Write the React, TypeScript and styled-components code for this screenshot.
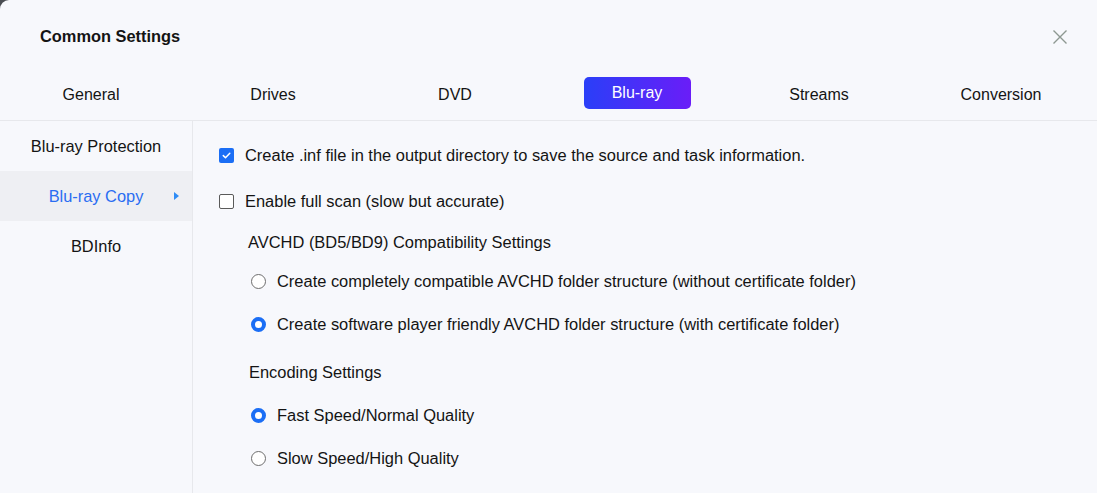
import React, { useState } from "react";
import styled, { createGlobalStyle } from "styled-components";

const Global = createGlobalStyle`
  html, body { margin: 0; padding: 0; background: #4a4d52; }
  body { font-family: "Liberation Sans", Arial, sans-serif; }
  * { box-sizing: border-box; }
`;

const Window = styled.div`
  width: 1097px;
  height: 493px;
  background: #f7f8fc;
  border-top-left-radius: 9px;
  display: flex;
  flex-direction: column;
  color: #141414;
  overflow: hidden;
`;

const Header = styled.div`
  height: 72px;
  padding: 1px 29px 0 40px;
  display: flex;
  align-items: center;
  justify-content: space-between;
`;

const Title = styled.div`
  font-size: 16.4px;
  font-weight: bold;
`;

const CloseButton = styled.button`
  border: 0;
  background: none;
  padding: 0;
  width: 16px;
  height: 16px;
  display: flex;
  cursor: pointer;
`;

const TabRow = styled.div`
  display: grid;
  grid-template-columns: repeat(6, 182px);
  height: 49px;
  padding-top: 5px;
  border-bottom: 1px solid #e7e8ec;
`;

const TabCell = styled.div`
  display: flex;
  justify-content: center;
`;

const Tab = styled.div<{ $active?: boolean }>`
  height: 32px;
  line-height: 32px;
  font-size: 16px;
  padding: ${(p) => (p.$active ? "0 27px" : "2px 0 0")};
  min-width: ${(p) => (p.$active ? "107px" : "0")};
  text-align: center;
  border-radius: 5px;
  color: ${(p) => (p.$active ? "#ffffff" : "#141414")};
  background: ${(p) =>
    p.$active ? "linear-gradient(90deg, #2a3ff8 0%, #6a1df8 100%)" : "transparent"};
`;

const Body = styled.div`
  flex: 1;
  display: flex;
`;

const Sidebar = styled.div`
  width: 193px;
  border-right: 1px solid #e7e8ec;
  display: flex;
  flex-direction: column;
`;

const SideItem = styled.div<{ $active?: boolean }>`
  position: relative;
  height: 50px;
  padding-top: 1px;
  display: flex;
  align-items: center;
  justify-content: center;
  font-size: 16.4px;
  color: ${(p) => (p.$active ? "#2a6df2" : "#141414")};
  background: ${(p) => (p.$active ? "#eeeff3" : "transparent")};
`;

const Caret = styled.span`
  position: absolute;
  left: 174px;
  top: 21px;
  width: 0;
  height: 0;
  border-top: 4px solid transparent;
  border-bottom: 4px solid transparent;
  border-left: 5px solid #2f8cf5;
`;

const Content = styled.div`
  flex: 1;
  display: flex;
  flex-direction: column;
  padding: 24px 0 0 26px;
`;

const Row = styled.label<{ $mt: number; $indent?: number }>`
  display: flex;
  align-items: center;
  height: 20px;
  margin-top: ${(p) => p.$mt}px;
  margin-left: ${(p) => p.$indent ?? 0}px;
  font-size: 16.45px;
  gap: 11px;
  cursor: pointer;
`;

const Heading = styled.div<{ $mt: number; $indent: number }>`
  height: 20px;
  line-height: 20px;
  margin-top: ${(p) => p.$mt}px;
  margin-left: ${(p) => p.$indent}px;
  font-size: 16.45px;
`;

const Box = styled.span<{ $checked?: boolean }>`
  width: 15px;
  height: 15px;
  flex: none;
  border-radius: 2px;
  display: flex;
  align-items: center;
  justify-content: center;
  border: ${(p) => (p.$checked ? "none" : "1px solid #5a5a5a")};
  background: ${(p) => (p.$checked ? "#1b6ef5" : "#ffffff")};
`;

const Radio = styled.span<{ $checked?: boolean }>`
  width: 15px;
  height: 15px;
  flex: none;
  border-radius: 50%;
  border: ${(p) => (p.$checked ? "4px solid #1b6ef5" : "1px solid #6e6e6e")};
  background: #ffffff;
`;

const CheckMark = () => (
  <svg width="11" height="11" viewBox="0 0 11 11">
    <path d="M2.3 5.6 L4.5 7.7 L8.8 3.3" fill="none" stroke="#fff" strokeWidth="1.5" strokeLinecap="round" strokeLinejoin="round" />
  </svg>
);

const tabs = ["General", "Drives", "DVD", "Blu-ray", "Streams", "Conversion"];
const sideItems = ["Blu-ray Protection", "Blu-ray Copy", "BDInfo"];

export default function App() {
  const [inf, setInf] = useState(true);
  const [scan, setScan] = useState(false);
  const [avchd, setAvchd] = useState(1);
  const [enc, setEnc] = useState(0);

  return (
    <>
      <Global />
      <Window>
        <Header>
          <Title>Common Settings</Title>
          <CloseButton aria-label="Close">
            <svg width="16" height="16" viewBox="0 0 16 16">
              <path d="M1.5 1.5 L14.5 14.5 M14.5 1.5 L1.5 14.5" stroke="#8d9892" strokeWidth="1.4" fill="none" />
            </svg>
          </CloseButton>
        </Header>
        <TabRow>
          {tabs.map((t) => (
            <TabCell key={t}>
              <Tab $active={t === "Blu-ray"}>{t}</Tab>
            </TabCell>
          ))}
        </TabRow>
        <Body>
          <Sidebar>
            {sideItems.map((s) => (
              <SideItem key={s} $active={s === "Blu-ray Copy"}>
                {s}
                {s === "Blu-ray Copy" && <Caret />}
              </SideItem>
            ))}
          </Sidebar>
          <Content>
            <Row $mt={0} onClick={() => setInf(!inf)}>
              <Box $checked={inf}>{inf && <CheckMark />}</Box>
              Create .inf file in the output directory to save the source and task information.
            </Row>
            <Row $mt={26} onClick={() => setScan(!scan)}>
              <Box $checked={scan}>{scan && <CheckMark />}</Box>
              Enable full scan (slow but accurate)
            </Row>
            <Heading $mt={21} $indent={29}>AVCHD (BD5/BD9) Compatibility Settings</Heading>
            <Row $mt={19} $indent={32} onClick={() => setAvchd(0)}>
              <Radio $checked={avchd === 0} />
              Create completely compatible AVCHD folder structure (without certificate folder)
            </Row>
            <Row $mt={23} $indent={32} onClick={() => setAvchd(1)}>
              <Radio $checked={avchd === 1} />
              Create software player friendly AVCHD folder structure (with certificate folder)
            </Row>
            <Heading $mt={28} $indent={30}>Encoding Settings</Heading>
            <Row $mt={23} $indent={32} onClick={() => setEnc(0)}>
              <Radio $checked={enc === 0} />
              Fast Speed/Normal Quality
            </Row>
            <Row $mt={23} $indent={32} onClick={() => setEnc(1)}>
              <Radio $checked={enc === 1} />
              Slow Speed/High Quality
            </Row>
          </Content>
        </Body>
      </Window>
    </>
  );
}
